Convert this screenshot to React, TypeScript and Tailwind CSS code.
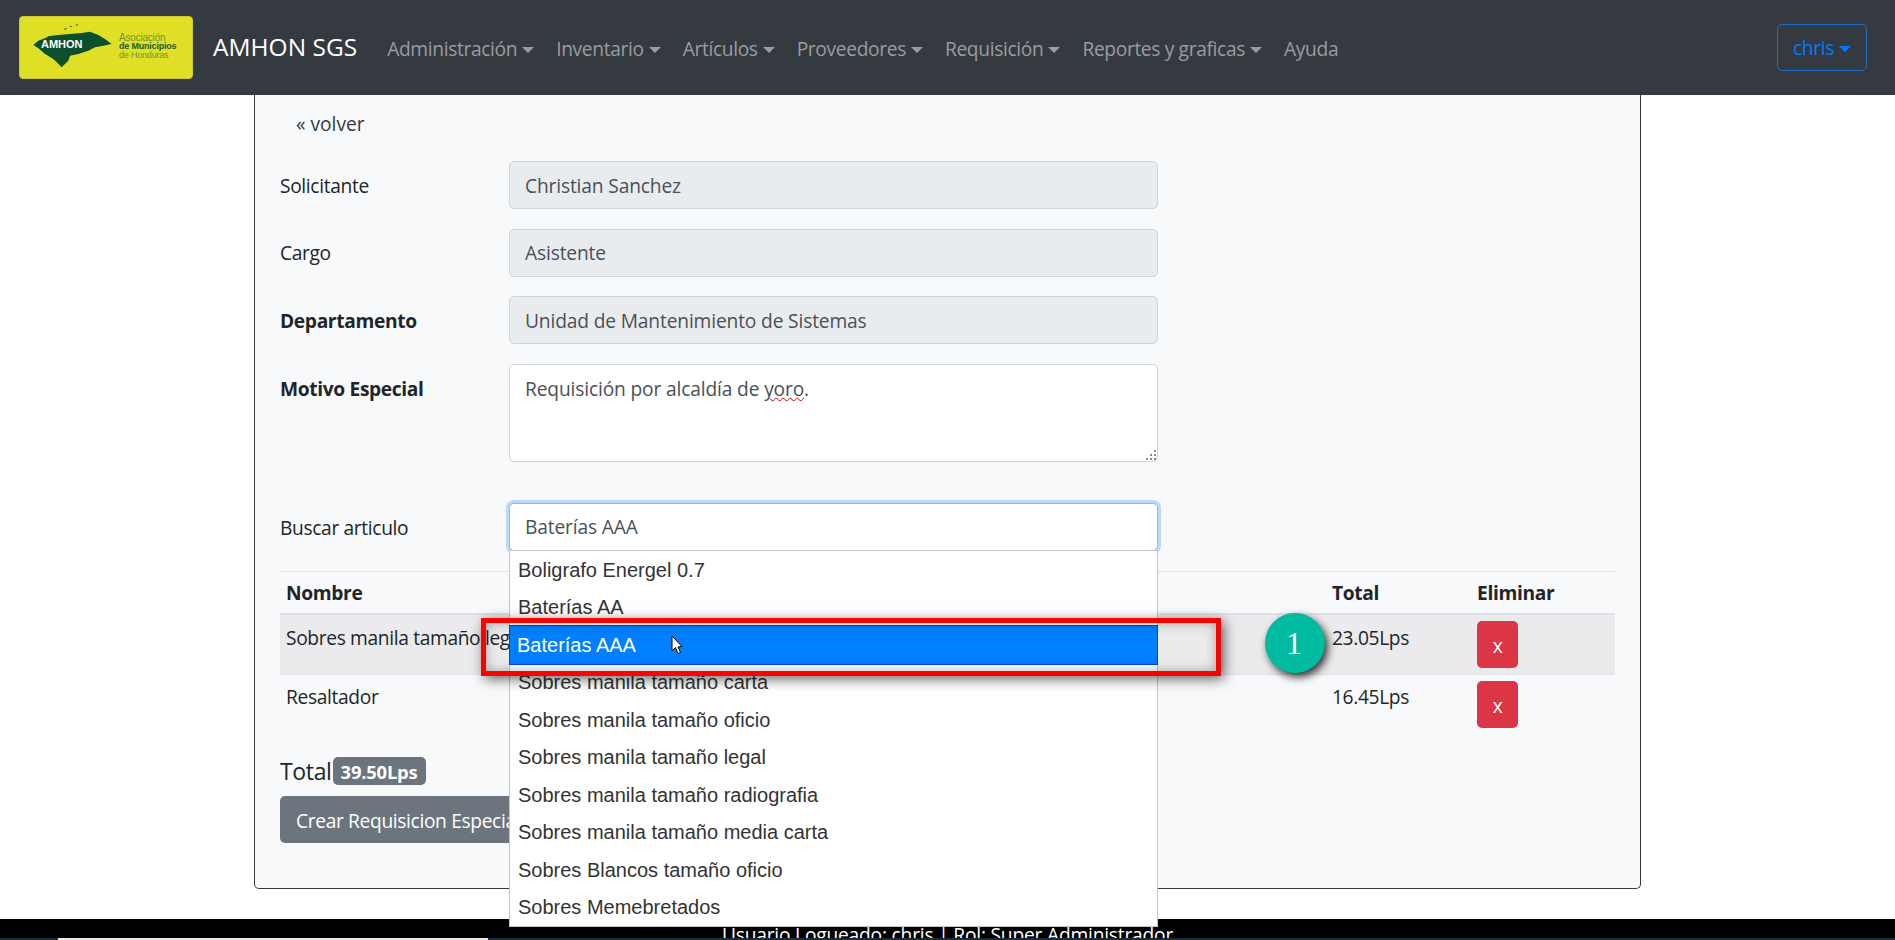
import React from "react";

const menus = ["Administración", "Inventario", "Artículos", "Proveedores", "Requisición", "Reportes y graficas"];

const suggestions = [
  "Boligrafo Energel 0.7",
  "Baterías AA",
  "Baterías AAA",
  "Sobres manila tamaño carta",
  "Sobres manila tamaño oficio",
  "Sobres manila tamaño legal",
  "Sobres manila tamaño radiografia",
  "Sobres manila tamaño media carta",
  "Sobres Blancos tamaño oficio",
  "Sobres Memebretados",
];

function Caret() {
  return <span className="ml-[5px] inline-block align-[3px] border-x-[6px] border-t-[6px] border-x-transparent border-t-current" />;
}

function Logo() {
  return (
    <div className="flex w-[174px] h-[63px] items-center rounded-[4px] border border-[#c9c92a] bg-[#dfdf26] pl-[13px] gap-[6px]">
      <div className="relative w-[80px] h-[47px] shrink-0">
        <svg viewBox="54 35 240 141" className="absolute inset-0 w-full h-full">
          <path
            fill="#0c4f2c"
            d="M55 98 L70 85 L90 78 L100 72 L130 68 L165 65 L200 62 L225 58 L250 68 L270 80 L290 95 L265 100 L240 105 L220 115 L190 125 L165 130 L160 145 L140 165 L125 150 L115 140 L90 125 L70 108 Z"
          />
          <path fill="#0c4f2c" d="M145 50 L156 47 L152 52 Z M163 43 L172 40 L169 45 Z M182 37 L190 36 L186 41 Z" />
        </svg>
        <span className="absolute left-[8px] top-[13px] font-['Liberation_Sans',sans-serif] text-[11px] leading-[14px] font-bold tracking-normal text-white">AMHON</span>
      </div>
      <div className="font-['Liberation_Sans',sans-serif] text-[9px] leading-[9px] tracking-[-0.2px] text-[#6b9a2a] pb-[2px]">
        <div className="text-[10px]">Asociación</div>
        <div className="font-bold text-[#1d5c2e]">de Municipios</div>
        <div>de Honduras</div>
      </div>
    </div>
  );
}

function Field({ label, value, bold }: { label: string; value: string; bold?: boolean }) {
  return (
    <div className="flex items-center h-[48px] mb-[19.6px]">
      <label className={`w-[229px] shrink-0 pt-[2px] ${bold ? "font-bold" : ""}`}>{label}</label>
      <div className="flex items-center w-[649px] h-[48px] px-[15px] pt-[2px] rounded-[5px] border border-[#ced4da] bg-[#e9ecef] text-[#495057] tracking-[-0.15px]">{value}</div>
    </div>
  );
}

function DeleteButton() {
  return (
    <button className="flex w-[41px] h-[47px] items-center justify-center pt-[4px] rounded-[5px] bg-[#dc3545] text-white">x</button>
  );
}

export default function App() {
  return (
    <div className="relative h-[940px] overflow-hidden bg-white text-[19.2px] leading-[28.8px] text-[#212529] font-['Open_Sans',sans-serif] tracking-[-0.35px]">
      {/* Navbar */}
      <nav className="flex items-center h-[95px] pl-[19px] pr-[28px] bg-[#343a40]">
        <Logo />
        <span className="ml-[20px] mr-[30px] text-[24.5px] tracking-normal text-white">AMHON SGS</span>
        <div className="flex items-center gap-[22px] pt-[3px] text-[#9a9da0]">
          {menus.map((m) => (
            <span key={m} className="whitespace-nowrap">
              {m}
              <Caret />
            </span>
          ))}
          <span>Ayuda</span>
        </div>
        <button className="ml-auto w-[90px] h-[47px] pt-[2px] rounded-[5px] border border-[#1f6fc8] text-[#007bff]">
          chris
          <Caret />
        </button>
      </nav>

      {/* Card */}
      <main className="w-[1387px] h-[794px] ml-[254px] px-[25px] rounded-b-[5px] border border-t-0 border-[#343a40] bg-[#f8f9fa]">
        <div className="pl-[16px] h-[66px] pt-[15px] tracking-normal text-[#343a40]">« volver</div>
        <Field label="Solicitante" value="Christian Sanchez" />
        <Field label="Cargo" value="Asistente" />
        <Field label="Departamento" value="Unidad de Mantenimiento de Sistemas" bold />
        <div className="flex h-[98px] mb-[41px]">
          <label className="w-[229px] shrink-0 pt-[11px] font-bold">Motivo Especial</label>
          <div className="relative w-[649px] px-[15px] pt-[10px] rounded-[5px] border border-[#ced4da] bg-white text-[#495057] tracking-[-0.15px]">
            Requisición por alcaldía de <span className="underline decoration-wavy decoration-[#c00] decoration-1">yoro</span>.
            <svg viewBox="0 0 10 10" className="absolute right-[1px] bottom-[1px] w-[10px] h-[10px]">
              <path fill="#8a8a8a" d="M8 0h2v2H8zM4 4h2v2H4zM8 4h2v2H8zM0 8h2v2H0zM4 8h2v2H4zM8 8h2v2H8z" />
            </svg>
          </div>
        </div>
        <div className="flex items-center h-[48px] mb-[20px]">
          <label className="w-[229px] shrink-0 pt-[3px]">Buscar articulo</label>
          <div className="flex items-center w-[649px] h-[48px] px-[15px] pt-[2px] rounded-[5px] border border-[#80bdff] bg-white text-[#495057] tracking-[-0.15px] shadow-[0_0_0_3px_rgba(0,123,255,0.25)]">Baterías AAA</div>
        </div>

        {/* Table */}
        <table className="w-full table-fixed border-t border-[#dee2e6]">
          <colgroup>
            <col className="w-[1046px]" />
            <col className="w-[145px]" />
            <col />
          </colgroup>
          <thead>
            <tr className="h-[43px] border-b-2 border-[#dee2e6] font-bold">
              <th className="pl-[6px] pt-[2px] text-left">Nombre</th>
              <th className="pl-[6px] pt-[2px] text-left">Total</th>
              <th className="pl-[6px] pt-[2px] text-left">Eliminar</th>
            </tr>
          </thead>
          <tbody>
            <tr className="h-[60px] border-b border-[#dee2e6] bg-[#ebebed]">
              <td className="pl-[6px] pb-[12px]">Sobres manila tamaño legal</td>
              <td className="pl-[6px] pb-[12px]">23.05Lps</td>
              <td className="pl-[6px]"><DeleteButton /></td>
            </tr>
            <tr className="h-[59px]">
              <td className="pl-[6px] pb-[14px]">Resaltador</td>
              <td className="pl-[6px] pb-[14px]">16.45Lps</td>
              <td className="pl-[6px]"><DeleteButton /></td>
            </tr>
          </tbody>
        </table>

        <div className="flex items-center mt-[24px] h-[28px] text-[23px]">
          Total
          <span className="flex items-center justify-center w-[93px] h-[28px] ml-[1px] pt-[2px] rounded-[5px] bg-[#6c757d] text-[18.4px] tracking-[-0.2px] font-bold text-white">39.50Lps</span>
        </div>
        <button className="mt-[11px] w-[300px] h-[47px] pl-[16px] pt-[3px] text-left whitespace-nowrap rounded-[5px] bg-[#6c757d] text-white">Crear Requisicion Especial</button>
      </main>

      {/* Footer */}
      <footer className="absolute inset-x-0 top-[919px] h-[19px] overflow-hidden bg-black text-center tracking-[-0.2px] text-white">
        <span className="relative top-[2px]">Usuario Logueado: chris | Rol: Super Administrador</span>
      </footer>
      <div className="absolute inset-x-0 top-[938px] h-[2px] bg-[#1b2a3a]">
        <div className="ml-[58px] w-[430px] h-full bg-[#ececec]" />
      </div>

      {/* Autocomplete list */}
      <ul className="absolute left-[509px] top-[550px] w-[649px] h-[377px] border border-[#c5c5c5] bg-white font-['Liberation_Sans',sans-serif] text-[20px] tracking-normal text-[#333]">
        {suggestions.map((s, i) =>
          i === 2 ? (
            <li key={s} className="relative flex items-center h-[40px] -my-[1.25px] -mx-px pl-[7px] pt-[1px] border border-[#003eff] bg-[#007fff] text-white">{s}</li>
          ) : (
            <li key={s} className="flex items-center h-[37.5px] pl-[8px] pt-[1px]">{s}</li>
          ),
        )}
      </ul>

      {/* Annotation */}
      <div className="absolute left-[481px] top-[618px] w-[740px] h-[58px] border-[5px] border-[#ff0000] shadow-[3px_3px_12px_rgba(0,0,0,0.6),inset_0_0_12px_rgba(0,0,0,0.3)]" />
      <div className="absolute left-[1265px] top-[613px] flex w-[60px] h-[60px] pr-[2px] items-center justify-center rounded-full bg-[#00bb9f] font-['Liberation_Serif',serif] text-[32px] tracking-normal text-white shadow-[3px_4px_9px_rgba(0,0,0,0.8)]">1</div>
      <svg viewBox="0 0 12 20" className="absolute left-[671px] top-[635px] w-[12px] h-[20px]">
        <path d="M1 1 L1 16 L4.5 12.5 L7 18.5 L9.5 17.5 L7 12 L11 11.5 Z" fill="white" stroke="black" strokeWidth="1" />
      </svg>
    </div>
  );
}
